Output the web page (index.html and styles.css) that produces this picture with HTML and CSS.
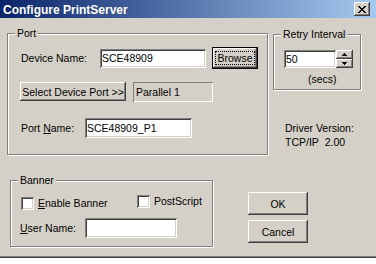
FILE: index.html
```html
<!DOCTYPE html>
<html lang="en">
<head>
<meta charset="UTF-8">
<title>Configure PrintServer</title>
<link rel="stylesheet" href="styles.css">
</head>
<body>

<div class="window">
    <div class="titlebar">
        <span class="title">Configure PrintServer</span>
        <button class="close-btn">
            <svg width="8" height="7" viewBox="0 0 8 7"><path d="M0 0h2v1H0zM6 0h2v1H6zM1 1h2v1H1zM5 1h2v1H5zM2 2h4v1H2zM3 3h2v1H3zM2 4h4v1H2zM1 5h2v1H1zM5 5h2v1H5zM0 6h2v1H0zM6 6h2v1H6z" fill="#000"/></svg>
        </button>
    </div>

    <div class="content">
        <div class="top-row">
            <div class="group group-port">
                <span class="legend">Port</span>

                <div class="row row-device">
                    <label class="label label-device">Device Name:</label>
                    <input class="edit edit-device" type="text" value="SCE48909">
                    <button class="btn btn-default btn-browse"><span class="focus">Browse</span></button>
                </div>

                <div class="row row-select">
                    <button class="btn btn-select">Select Device Port &gt;&gt;</button>
                    <div class="static">Parallel 1</div>
                </div>

                <div class="row row-portname">
                    <label class="label label-portname">Port <u>N</u>ame:</label>
                    <input class="edit edit-portname" type="text" value="SCE48909_P1">
                </div>
            </div>

            <div class="side">
                <div class="group group-retry">
                    <span class="legend">Retry Interval</span>
                    <div class="spin">
                        <input class="edit edit-spin" type="text" value="50">
                        <div class="spin-btns">
                            <button class="btn spin-btn"><svg width="5" height="3" viewBox="0 0 5 3"><path d="M2 0h1v1H2zM1 1h3v1H1zM0 2h5v1H0z" fill="#000"/></svg></button>
                            <button class="btn spin-btn"><svg width="5" height="3" viewBox="0 0 5 3"><path d="M0 0h5v1H0zM1 1h3v1H1zM2 2h1v1H2z" fill="#000"/></svg></button>
                        </div>
                    </div>
                    <div class="secs">(secs)</div>
                </div>

                <div class="driver">
                    <div>Driver Version:</div>
                    <div>TCP/IP&nbsp; 2.00</div>
                </div>
            </div>
        </div>

        <div class="bottom-row">
            <div class="group group-banner">
                <span class="legend">Banner</span>

                <div class="row row-checks">
                    <div class="option option-enable">
                        <span class="check"></span>
                        <span><u>E</u>nable Banner</span>
                    </div>
                    <div class="option option-ps">
                        <span class="check"></span>
                        <span>PostScript</span>
                    </div>
                </div>

                <div class="row row-user">
                    <label class="label label-user"><u>U</u>ser Name:</label>
                    <input class="edit edit-user" type="text" value="">
                </div>
            </div>

            <div class="actions">
                <button class="btn btn-action">OK</button>
                <button class="btn btn-action">Cancel</button>
            </div>
        </div>
    </div>
</div>

</body>
</html>
```

FILE: styles.css
```css
* {
    margin: 0;
    box-sizing: border-box;
}

body {
    background: #ffffff;
    font-family: "Liberation Sans", Arial, sans-serif;
    font-size: 10.5px;
    color: #000000;
}

.window {
    width: 376px;
    height: 258px;
    background: #d4d0c8;
    box-shadow: inset 0 -1px #404040, inset 0 -2px #808080;
}

/* barra de titulo */
.titlebar {
    height: 18px;
    display: flex;
    align-items: flex-start;
    background: linear-gradient(90deg, #0a246a 0%, #a6caf0 100%);
}

.title {
    color: #ffffff;
    font-weight: bold;
    font-size: 12px;
    line-height: 18px;
    padding: 1px 0 0 3px;
}

.close-btn {
    margin: 2px 6px 0 auto;
    width: 16px;
    height: 14px;
}

button {
    font: inherit;
    color: #000000;
    border: none;
    padding: 0;
    background: #d4d0c8;
    white-space: nowrap;
    display: flex;
    align-items: center;
    justify-content: center;
}

.close-btn,
.btn {
    box-shadow: inset -1px -1px #404040, inset 1px 1px #ffffff, inset -2px -2px #808080, inset 2px 2px #d4d0c8;
}

.btn-default {
    border: 1px solid #000000;
    padding: 3px 2px;
}

.focus {
    display: block;
    width: 100%;
    height: 100%;
    border: 1px dotted #000000;
    line-height: 12px;
    text-align: center;
}

.content {
    padding: 15px 0 0 7px;
}

.top-row,
.bottom-row,
.row {
    display: flex;
    align-items: center;
}

.top-row {
    align-items: flex-start;
}

/* group box */
.group {
    position: relative;
    border: 1px solid #808080;
    box-shadow: inset 1px 1px #ffffff, 1px 1px #ffffff;
}

.legend {
    position: absolute;
    top: -7px;
    left: 7px;
    padding: 0 2px;
    line-height: 13px;
    background: #d4d0c8;
}

.edit {
    font: inherit;
    border: none;
    outline: none;
    background: #ffffff;
    padding: 0 2px;
    box-shadow: inset 1px 1px #808080, inset -1px -1px #ffffff, inset 2px 2px #404040, inset -2px -2px #d4d0c8;
}

.static {
    display: flex;
    align-items: center;
    padding-left: 3px;
    box-shadow: inset 1px 1px #808080, inset -1px -1px #ffffff;
}

.label {
    padding-left: 1px;
}

/* Port */
.group-port {
    width: 261px;
    height: 122px;
    padding-left: 12px;
}

.row-device {
    margin-top: 13px;
    height: 22px;
}

.label-device {
    width: 80px;
}

.edit-device {
    width: 106px;
    height: 19px;
}

.btn-browse {
    width: 46px;
    height: 22px;
    margin-left: 6px;
}

.row-select {
    margin-top: 13px;
    height: 20px;
    align-items: flex-start;
}

.btn-select {
    width: 106px;
    height: 19px;
}

.row-select .static {
    width: 80px;
    height: 20px;
    margin-left: 7px;
}

.row-portname {
    margin-top: 16px;
    height: 20px;
}

.label-portname {
    width: 65px;
}

.edit-portname {
    width: 107px;
    height: 20px;
}

/* Retry */
.side {
    margin-left: 5px;
    display: flex;
    flex-direction: column;
}

.group-retry {
    width: 88px;
    height: 56px;
    margin-top: 1px;
    padding-left: 10px;
}

.spin {
    display: flex;
    margin-top: 15px;
    height: 18px;
}

.edit-spin {
    width: 52px;
    height: 18px;
}

.spin-btns {
    display: flex;
    flex-direction: column;
}

.spin-btn {
    width: 17px;
    height: 9px;
}

.secs {
    padding-left: 24px;
    margin-top: 5px;
    line-height: 13px;
}

.driver {
    margin-top: 31px;
    padding-left: 12px;
    line-height: 14px;
}

/* Banner */
.bottom-row {
    margin-top: 25px;
    align-items: flex-start;
}

.group-banner {
    margin-left: 3px;
    width: 203px;
    height: 67px;
    padding-left: 10px;
}

.row-checks {
    margin-top: 14px;
    height: 15px;
    align-items: flex-start;
}

.option {
    display: flex;
    align-items: center;
    gap: 4px;
    line-height: 13px;
}

.option-enable {
    width: 116px;
    margin-top: 2px;
}

.check {
    width: 13px;
    height: 13px;
    background: #ffffff;
    box-shadow: inset 1px 1px #808080, inset -1px -1px #ffffff, inset 2px 2px #404040, inset -2px -2px #d4d0c8;
}

.row-user {
    margin-top: 8px;
    height: 20px;
}

.label-user {
    width: 66px;
    margin-left: -2px;
}

.edit-user {
    width: 92px;
    height: 20px;
}

.actions {
    margin: 12px 0 0 35px;
    display: flex;
    flex-direction: column;
    gap: 5px;
}

.btn-action {
    width: 60px;
    height: 23px;
}
```
